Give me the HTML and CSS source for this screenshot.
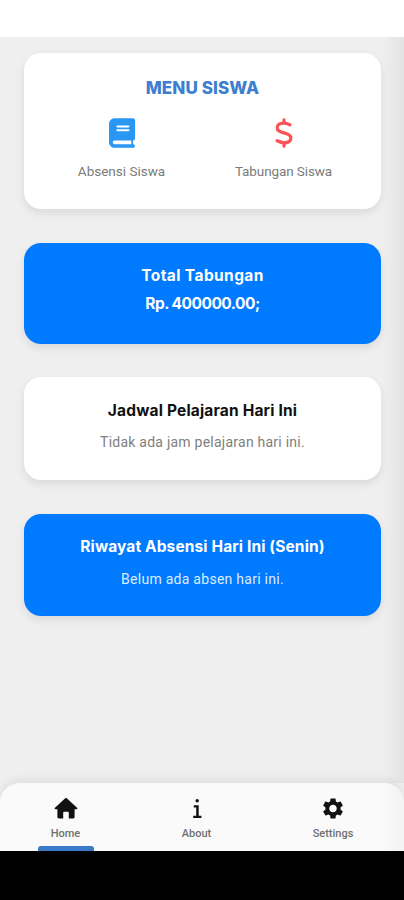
FILE: index.html
```
<!DOCTYPE html>
<html lang="id">
<head>
<meta charset="utf-8">
<title>Menu Siswa</title>
<link rel="stylesheet" href="styles.css">
</head>
<body>
<div class="status"></div>
<main class="page">
  <section class="card menu">
    <h1 class="menu-title">MENU SISWA</h1>
    <div class="menu-items">
      <div class="menu-item">
        <svg class="menu-icon book" viewBox="0 0 448 512"><path d="M96 0C43 0 0 43 0 96V416c0 53 43 96 96 96H384h32c17.7 0 32-14.3 32-32s-14.3-32-32-32V384c17.7 0 32-14.3 32-32V32c0-17.7-14.3-32-32-32H384 96zm0 384H384v64H96c-17.700 0-32-14.300-32-32s14.300-32 32-32zm32-240c0-8.800 7.200-16 16-16H336c8.800 0 16 7.200 16 16s-7.200 16-16 16H144c-8.800 0-16-7.200-16-16zm16 48H336c8.800 0 16 7.200 16 16s-7.200 16-16 16H144c-8.800 0-16-7.200-16-16s7.200-16 16-16z"/></svg>
        <span class="menu-label absensi">Absensi Siswa</span>
      </div>
      <div class="menu-item">
        <svg class="menu-icon dollar" viewBox="0 0 18 30"><path d="M9 2V5M9 25v3M14.800 6.800C12.800 5.700 10.500 5.200 8.400 5.200 4.700 5.200 2.200 7 2.200 9.700c0 3.400 3.100 4.200 6.800 5.100 3.800.9 6.900 1.900 6.900 5.300 0 3-2.700 4.700-6.300 4.700-2.500 0-5-.8-7.400-2"/></svg>
        <span class="menu-label tabungan">Tabungan Siswa</span>
      </div>
    </div>
  </section>
  <section class="card blue total">
    <h2 class="title total-title">Total Tabungan</h2>
    <p class="title amount">Rp. 400000.00;</p>
  </section>
  <section class="card schedule">
    <h2 class="title schedule-title">Jadwal Pelajaran Hari Ini</h2>
    <p class="note schedule-note">Tidak ada jam pelajaran hari ini.</p>
  </section>
  <section class="card blue history">
    <h2 class="title history-title">Riwayat Absensi Hari Ini (Senin)</h2>
    <p class="note history-note">Belum ada absen hari ini.</p>
  </section>
</main>
<nav class="nav">
  <a class="tab active">
    <svg class="tab-icon" viewBox="0 0 24 22"><path d="M11.200 1.300a1.300 1.300 0 0 1 1.600 0L23 10.700c.8.700.4 1.500-.6 1.500h-1.800v7.800c0 .9-.5 1.400-1.400 1.400h-4.400v-5.400c0-.8-.4-1.200-1.200-1.200h-3.200c-.8 0-1.200.4-1.200 1.200v5.400H4.800c-.9 0-1.400-.5-1.400-1.400V12.200H1.600c-1 0-1.400-.8-.6-1.500z"/></svg>
    <span class="tab-label">Home</span>
  </a>
  <a class="tab">
    <svg class="tab-icon" viewBox="0 0 24 22"><circle cx="12.200" cy="3.800" r="1.700"/><path d="M8.800 8.200h4.900v10.600h2.700V21H8.200v-2.200h3v-8.400H8.800z"/></svg>
    <span class="tab-label">About</span>
  </a>
  <a class="tab">
    <svg class="tab-icon gear" viewBox="2 2 20 20"><path d="M19.14 12.94c.04-.3.06-.61.06-.94 0-.32-.02-.64-.07-.94l2.03-1.58c.18-.14.23-.41.12-.61l-1.92-3.32c-.12-.22-.37-.29-.59-.22l-2.39.96c-.5-.38-1.03-.7-1.62-.94l-.36-2.54c-.04-.24-.24-.41-.48-.41h-3.84c-.24 0-.43.17-.47.41l-.36 2.54c-.59.24-1.13.57-1.62.94l-2.39-.96c-.22-.08-.47 0-.59.22L2.740 8.870c-.12.21-.08.47.12.61l2.03 1.58c-.05.3-.09.63-.09.94s.02.64.07.94l-2.03 1.58c-.18.14-.23.41-.12.61l1.92 3.32c.12.22.37.29.59.22l2.39-.96c.5.38 1.03.7 1.62.94l.36 2.54c.05.24.24.41.48.41h3.84c.24 0 .44-.17.47-.41l.36-2.54c.59-.24 1.13-.56 1.62-.94l2.39.96c.22.08.47 0 .59-.22l1.92-3.32c.12-.22.07-.47-.12-.61l-2.010-1.580zM12 15.600c-1.980 0-3.600-1.620-3.600-3.600s1.620-3.600 3.600-3.600 3.600 1.620 3.600 3.600-1.620 3.600-3.600 3.600z"/></svg>
    <span class="tab-label">Settings</span>
  </a>
</nav>
<div class="system-bar"></div>
</body>
</html>
```
FILE: styles.css
```
* { box-sizing: border-box; }

body {
  margin: 0;
  height: 900px;
  display: flex;
  flex-direction: column;
  background: #efefef;
  font-family: Roboto, sans-serif;
  overflow: hidden;
}

h1, h2, p { margin: 0; }

.status { height: 37px; background: #fff; }

.page {
  height: 746px;
  padding: 16px 23px 0 24px;
  display: flex;
  flex-direction: column;
  gap: 33.600px;
  background: linear-gradient(to right, transparent 382px, rgba(0, 0, 0, .05)), #efefef;
}

.card {
  flex: none;
  border-radius: 17px;
  background: #fff;
  box-shadow: 0 4px 9px rgba(0, 0, 0, .09);
  display: flex;
  flex-direction: column;
  align-items: center;
  white-space: nowrap;
}

.blue { background: #007aff; color: #fff; }

.menu { height: 156px; padding-top: 23px; }

.menu-title {
  font: 800 17px/24px Inter, sans-serif;
  letter-spacing: .1px;
  color: #3e7ed0;
}

.menu-items {
  display: grid;
  grid-template-columns: 162px 162px;
  margin: 18px 0 0;
}

.menu-item { display: flex; flex-direction: column; align-items: center; gap: 14px; }
.menu-icon { height: 30px; }
.book { width: 26px; fill: #2b97f5; }
.dollar { width: 18px; fill: none; stroke: #fa5457; stroke-width: 3.300; stroke-linecap: round; stroke-linejoin: round; }
.menu-label { font-size: 13.500px; line-height: 18px; color: #7b7b7b; }
.absensi { letter-spacing: 0; }
.tabungan { letter-spacing: -.1px; }

.title { font: 700 15.500px/28px Inter, sans-serif; }

.total { height: 101px; padding-top: 19px; }
.total-title { letter-spacing: .4px; }
.amount { letter-spacing: -.5px; }

.schedule { height: 103px; padding-top: 20px; }
.schedule-title { color: #111; letter-spacing: .18px; }
.note { font-size: 14px; line-height: 20px; margin-top: 7px; }
.schedule-note { color: #808080; letter-spacing: .24px; }

.history { height: 102px; padding-top: 19px; }
.history-title { letter-spacing: .12px; }
.history-note { color: #dcecff; margin-top: 8px; letter-spacing: .27px; }

.nav {
  height: 68px;
  flex: none;
  display: grid;
  grid-template-columns: 131px 131px 1fr;
  border-radius: 20px 20px 0 0;
  background: linear-gradient(to right, #fafafa 380px, #f3f3f3);
  box-shadow: 0 -4px 8px rgba(0, 0, 0, .06);
}

.tab {
  display: flex;
  flex-direction: column;
  align-items: center;
  padding-top: 14px;
  position: relative;
}

.tab-icon { width: 24px; height: 22px; fill: #111; }
.gear { height: 21px; margin-top: 1px; }
.tab-label { margin-top: 8px; font-size: 11px; font-weight: 500; line-height: 14px; color: #707070; }

.active::after {
  content: "";
  position: absolute;
  bottom: 0;
  left: 38px;
  width: 56px;
  height: 5px;
  border-radius: 3px 3px 0 0;
  background: #3b79c9;
}

.system-bar { height: 49px; flex: none; background: #000; }
```
